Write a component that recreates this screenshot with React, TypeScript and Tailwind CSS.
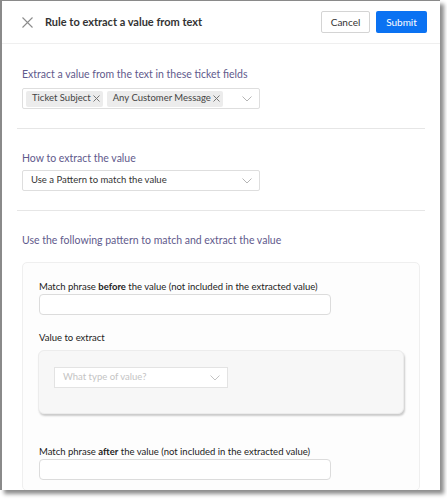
import React from "react";

const Chevron = ({ color = "#b5b5b5" }: { color?: string }) => (
  <svg width="10" height="6" viewBox="0 0 10 6" fill="none">
    <path d="M0.5 0.5 L5 5 L9.5 0.5" stroke={color} strokeWidth="1" />
  </svg>
);

const SmallX = () => (
  <svg width="7" height="7" viewBox="0 0 7 7" fill="none">
    <path d="M0.5 0.5 L6.5 6.5 M6.5 0.5 L0.5 6.5" stroke="#777" strokeWidth="1" />
  </svg>
);

const Chip = ({ label }: { label: string }) => (
  <div className="flex items-center gap-[2px] bg-[#ececec] rounded-[2px] h-[16px] pl-[6px] pr-[3px] text-[9.5px] text-[#444] whitespace-nowrap">
    <span>{label}</span>
    <SmallX />
  </div>
);

export default function App() {
  return (
    <div
      className="w-[447px] h-[501px] bg-white relative overflow-hidden"
      style={{ fontFamily: "Lato, 'Noto Sans', sans-serif" }}
    >
      <div className="w-[440px] h-[490px] bg-white border-l-[2px] border-t border-[#8a8a8a] shadow-[4px_4px_4px_rgba(0,0,0,0.45)] overflow-hidden flex flex-col">
        {/* header */}
        <div className="h-[43px] shrink-0 flex items-center border-b border-[#efefef] pl-[20px] pr-[13px]">
          <svg width="11" height="11" viewBox="0 0 11 11" fill="none">
            <path d="M0.5 0.5 L10.5 10.5 M10.5 0.5 L0.5 10.5" stroke="#8c8c8c" strokeWidth="1.1" />
          </svg>
          <div className="ml-[12px] text-[11px] font-bold text-[#333]">
            Rule to extract a value from text
          </div>
          <div className="ml-auto flex gap-[6px]">
            <button className="h-[22px] w-[49px] border border-[#d4d4d4] rounded-[2px] text-[10px] text-[#333] bg-white">
              Cancel
            </button>
            <button className="h-[22px] w-[51px] rounded-[2px] text-[10px] text-white bg-[#0b72f2]">
              Submit
            </button>
          </div>
        </div>

        {/* section 1 */}
        <div className="ml-[15px] mr-[15px] pl-[5px] pt-[22px] pb-[19px] border-b border-[#e6e6e6]">
          <div className="text-[10.5px] text-[#5f5a8c] leading-[16px]">
            Extract a value from the text in these ticket fields
          </div>
          <div className="mt-[6px] w-[238px] h-[21px] border border-[#dedede] rounded-[2px] flex items-center pl-[3px] pr-[7px] gap-[4px]">
            <Chip label="Ticket Subject" />
            <Chip label="Any Customer Message" />
            <div className="ml-auto">
              <Chevron />
            </div>
          </div>
        </div>

        {/* section 2 */}
        <div className="ml-[15px] mr-[15px] pl-[5px] pt-[21px] pb-[19px] border-b border-[#e6e6e6]">
          <div className="text-[10.5px] text-[#5f5a8c] leading-[16px]">
            How to extract the value
          </div>
          <div className="mt-[4px] w-[238px] h-[21px] border border-[#dedede] rounded-[2px] flex items-center pl-[8px] pr-[7px]">
            <span className="text-[9.5px] text-[#333]">Use a Pattern to match the value</span>
            <div className="ml-auto">
              <Chevron />
            </div>
          </div>
        </div>

        {/* section 3 */}
        <div className="pl-[20px] pt-[21px]">
          <div className="text-[10.5px] text-[#5f5a8c] leading-[16px]">
            Use the following pattern to match and extract the value
          </div>
          <div className="mt-[14px] w-[398px] border border-[#efefef] rounded-[5px] bg-[#fdfdfd] pl-[16px] pt-[17px] pb-[10px]">
            <div className="text-[9.5px] text-[#222] leading-[14px]">
              Match phrase <b>before</b> the value (not included in the extracted value)
            </div>
            <div className="w-[292px] h-[21px] border border-[#dcdcdc] rounded-[4px] bg-white" />
            <div className="mt-[16px] text-[9.5px] text-[#222] leading-[14px]">Value to extract</div>
            <div className="mt-[5px] -ml-[1px] w-[366px] h-[64px] bg-[#f7f7f7] rounded-[6px] shadow-[1px_2px_2px_rgba(0,0,0,0.2)] border border-[#ececec] pl-[15px] pt-[16px]">
              <div className="w-[174px] h-[21px] bg-white border border-[#e3e3e3] flex items-center pl-[8px] pr-[7px]">
                <span className="text-[9.5px] text-[#c4c4c4]">What type of value?</span>
                <div className="ml-auto">
                  <Chevron color="#c4c4c4" />
                </div>
              </div>
            </div>
            <div className="mt-[31px] text-[9.5px] text-[#222] leading-[14px]">
              Match phrase <b>after</b> the value (not included in the extracted value)
            </div>
            <div className="w-[292px] h-[21px] border border-[#dcdcdc] rounded-[4px] bg-white" />
          </div>
        </div>
      </div>
    </div>
  );
}
